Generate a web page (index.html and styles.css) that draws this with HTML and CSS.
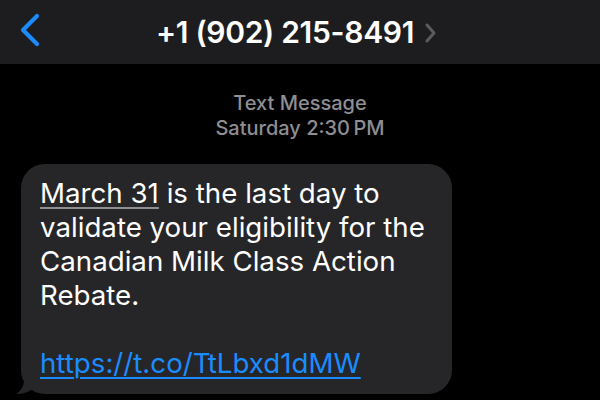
FILE: index.html
```html
<!DOCTYPE html>
<html lang="en">
<head>
<meta charset="utf-8">
<link rel="stylesheet" href="styles.css">
</head>
<body>
  <header class="nav">
    <div class="nav-left">
      <svg class="back" width="24" height="40" viewBox="0 0 24 40"><path d="M17 3 L3 17 L17 31" fill="none" stroke="#1a8cff" stroke-width="4.2" stroke-linecap="round" stroke-linejoin="round"/></svg>
    </div>
    <div class="nav-title">
      <span class="number">+1 (902) 215-8491</span>
      <svg class="chev" width="14" height="22" viewBox="0 0 14 22"><path d="M3 3 L10 11 L3 19" fill="none" stroke="#5b5b5f" stroke-width="3" stroke-linecap="round" stroke-linejoin="round"/></svg>
    </div>
    <div class="nav-right"></div>
  </header>
  <main class="thread">
    <div class="stamp">
      <div class="stamp-kind">Text Message</div>
      <div class="stamp-time">Saturday 2:30&#8239;PM</div>
    </div>
    <div class="bubble">
      <p class="msg"><span class="date-link">March 31</span> is the last day to validate your eligibility for the Canadian Milk Class Action Rebate.</p>
      <p class="msg link-line"><span class="url">https://t.co/TtLbxd1dMW</span></p>
      <svg class="tail" width="24" height="22" viewBox="0 0 24 22"><path d="M12 0 L12 8 C12 14 9 19 4 22 C11 22 17 20 22 16 Z" fill="#262628"/></svg>
    </div>
  </main>
</body>
</html>
```
FILE: styles.css
```css
html, body {
  margin: 0;
  padding: 0;
  background: #000;
  width: 600px;
  height: 400px;
  overflow: hidden;
  font-family: "Inter", "Liberation Sans", sans-serif;
  color: #fff;
}
.nav {
  height: 64px;
  background: #1d1d1f;
  display: grid;
  grid-template-columns: 1fr auto 1fr;
  align-items: center;
}
.nav-left {
  display: flex;
  align-items: center;
  padding-left: 20px;
}
.back {
  display: block;
  margin-top: 2px;
}
.nav-title {
  display: flex;
  align-items: center;
  gap: 10px;
  padding-right: 6px;
}
.number {
  font-size: 30px;
  font-weight: 600;
  letter-spacing: -0.3px;
}
.chev {
  display: block;
  margin-top: 1px;
}
.thread {
  display: flex;
  flex-direction: column;
  align-items: flex-start;
}
.stamp {
  align-self: stretch;
  text-align: center;
  color: #8e8e93;
  font-size: 20px;
  font-weight: 500;
  line-height: 25px;
  padding-top: 27px;
}
.bubble {
  position: relative;
  margin-top: 23px;
  margin-left: 21px;
  width: 431px;
  box-sizing: border-box;
  padding: 12px 18px 14px 19px;
  background: #262628;
  border-radius: 24px;
}
.msg {
  margin: 0;
  font-size: 27.7px;
  line-height: 34px;
  color: #fff;
}
.link-line {
  margin-top: 34px;
}
.date-link {
  text-decoration: underline;
  text-decoration-color: #8e8e93;
  text-decoration-thickness: 2px;
  text-underline-offset: 4px;
}
.url {
  color: #1a8cff;
  text-decoration: underline;
  text-decoration-thickness: 2px;
  text-underline-offset: 4px;
}
.tail {
  position: absolute;
  left: -9px;
  bottom: 0;
}
```
